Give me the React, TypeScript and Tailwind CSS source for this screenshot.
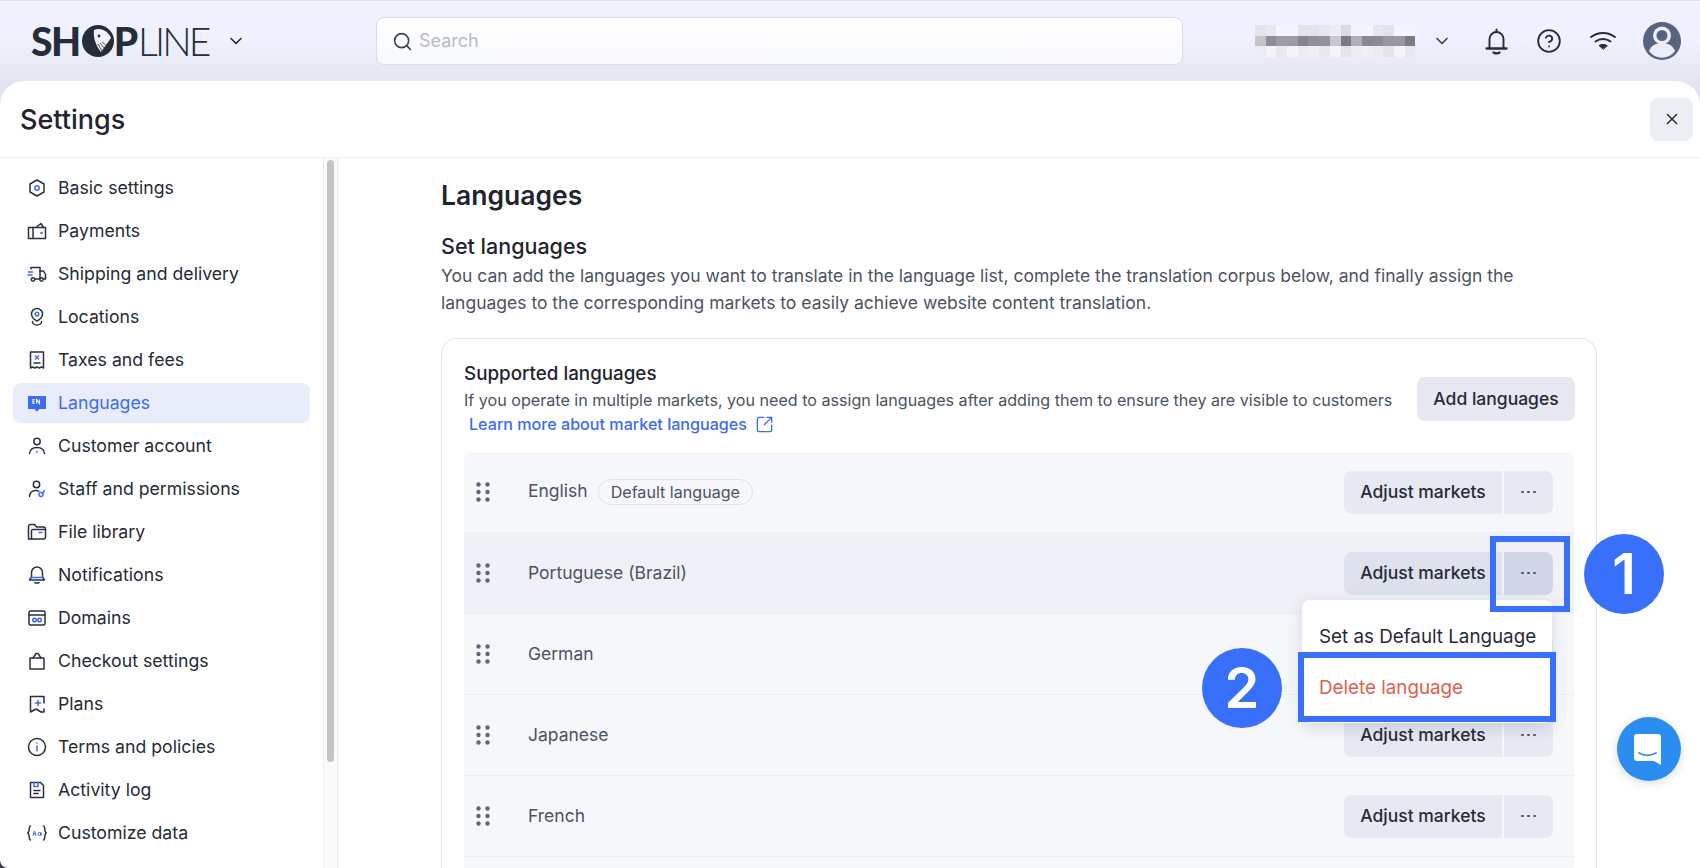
import { ChevronDown, CircleHelp, Search, SquareArrowOutUpRight, X } from "lucide-react";
import type { ReactNode } from "react";

const ink = "#2b3140";
const blue = "#3d6cf0";

function Ico({ children }: { children: ReactNode }) {
  return (
    <svg width="20" height="20" viewBox="0 0 20 20" fill="none" stroke={ink} strokeWidth="1.5" strokeLinecap="round" strokeLinejoin="round" className="shrink-0">
      {children}
    </svg>
  );
}

const navItems: { label: string; icon: ReactNode; active?: boolean }[] = [
  {
    label: "Basic settings",
    icon: (
      <Ico>
        <path d="M10 2l7 4v8l-7 4-7-4V6z" />
        <circle cx="10" cy="10" r="2.2" stroke={blue} />
      </Ico>
    ),
  },
  {
    label: "Payments",
    icon: (
      <Ico>
        <path d="M1.5 6.5h17v11h-17z" />
        <path d="M6 6.500v11" />
        <path d="M9 6.500l5-4 2.500 4" />
        <circle cx="14.500" cy="12" r=".6" stroke={blue} />
      </Ico>
    ),
  },
  {
    label: "Shipping and delivery",
    icon: (
      <Ico>
        <path d="M4 5V3.500h9V15H8" />
        <path d="M13 7h3.500l2 3.500V15h-2" />
        <circle cx="6" cy="15.500" r="1.700" />
        <circle cx="14.500" cy="15.500" r="1.700" />
        <path d="M1.500 8h4M1 11h4" stroke={blue} />
      </Ico>
    ),
  },
  {
    label: "Locations",
    icon: (
      <Ico>
        <path d="M10 14c-3-1.500-5.500-3.800-5.500-7a5.500 5.500 0 0 1 11 0c0 3.200-2.500 5.500-5.500 7z" />
        <circle cx="10" cy="7" r="1.800" stroke={blue} />
        <path d="M5.500 14.500c-.5 2 2 3.500 4.500 3.500s5-1.500 4.500-3.500" />
      </Ico>
    ),
  },
  {
    label: "Taxes and fees",
    icon: (
      <Ico>
        <path d="M3.500 2h13v16l-2.200-1-2.100 1-2.200-1-2.200 1-2.100-1-2.200 1z" />
        <path d="M8.500 6l3 3M11.500 6l-3 3" stroke={blue} />
        <path d="M7 13h6" />
      </Ico>
    ),
  },
  {
    label: "Languages",
    active: true,
    icon: (
      <svg width="20" height="20" viewBox="0 0 20 20" className="shrink-0">
        <path d="M1 3h18v13h-6.500L10 18.500 7.500 16H1z" fill={blue} />
        <path d="M7.500 6.500H6v4h1.500M6 8.500h1.500M9.500 10.500v-4l3 4v-4" stroke="#fff" strokeWidth="1.100" fill="none" />
      </svg>
    ),
  },
  {
    label: "Customer account",
    icon: (
      <Ico>
        <circle cx="10" cy="5.500" r="3.200" />
        <path d="M2.500 17.500c.5-4 3.500-6 7.500-6s7 2 7.500 6" />
        <path d="M10 15.500v.8" stroke={blue} />
      </Ico>
    ),
  },
  {
    label: "Staff and permissions",
    icon: (
      <Ico>
        <circle cx="9.500" cy="5.500" r="3.200" />
        <path d="M2.500 17.500c.3-3.800 3-6 6.500-6 1 0 2 .2 2.800.6" />
        <circle cx="14" cy="15.500" r="2" stroke={blue} />
        <path d="M15.500 14l2-2.500" stroke={blue} />
      </Ico>
    ),
  },
  {
    label: "File library",
    icon: (
      <Ico>
        <path d="M1.500 17V4.500a2 2 0 0 1 2-2h4l2 2.500h7a2 2 0 0 1 2 2V15a2 2 0 0 1-2 2z" />
        <path d="M4.500 17V9A1.500 1.500 0 0 1 6 7.500h12.500" />
        <path d="M12 10.500h3" stroke={blue} />
      </Ico>
    ),
  },
  {
    label: "Notifications",
    icon: (
      <Ico>
        <path d="M10 2a5.500 5.500 0 0 0-5.500 5.500V12L2.500 15h15l-2-3V7.500A5.500 5.500 0 0 0 10 2z" />
        <path d="M3.500 12.500h13" stroke={blue} />
        <path d="M8 17.500c.5.800 3.500.800 4 0" />
      </Ico>
    ),
  },
  {
    label: "Domains",
    icon: (
      <Ico>
        <rect x="2" y="3" width="16" height="14" rx="1.500" />
        <path d="M2 7h16" />
        <circle cx="7.500" cy="12" r="1.800" stroke={blue} />
        <circle cx="12.500" cy="12" r="1.800" stroke={blue} />
      </Ico>
    ),
  },
  {
    label: "Checkout settings",
    icon: (
      <Ico>
        <path d="M3 7h14v11H3z" />
        <path d="M6 7l3-4.500h2L14 7" />
      </Ico>
    ),
  },
  {
    label: "Plans",
    icon: (
      <Ico>
        <path d="M17 9V2.500H3.500V18l5.500-3 5 3h3v-3" />
        <path d="M11 6.500v5M8.500 9h5" stroke={blue} />
      </Ico>
    ),
  },
  {
    label: "Terms and policies",
    icon: (
      <Ico>
        <circle cx="10" cy="10" r="8.500" />
        <path d="M10 9v5" stroke={blue} />
        <path d="M10 6v.2" stroke={blue} />
      </Ico>
    ),
  },
  {
    label: "Activity log",
    icon: (
      <Ico>
        <path d="M3.500 2.500h10l3 3v12h-13z" />
        <path d="M7 2.500v4h4v-4" stroke={blue} />
        <path d="M7 10.500h6M7 13.500h4" />
      </Ico>
    ),
  },
  {
    label: "Customize data",
    icon: (
      <svg width="20" height="20" viewBox="0 0 20 20" fill="none" stroke={ink} strokeWidth="1.500" strokeLinecap="round" className="shrink-0">
        <path d="M3.500 3C1.500 3 3 9 .9 10c2.100 1 .6 7 2.600 7M16.500 3c2 0 .5 6 2.600 7-2.100 1-.6 7-2.600 7" />
        <path d="M6 12.500L7.500 8 9 12.500M6.500 11h2M14 9.500v3M14 11a1.500 1.500 0 1 1-3 0 1.500 1.500 0 0 1 3 0z" stroke={blue} strokeWidth="1" />
      </svg>
    ),
  },
];

// pixelated merchant name, each row is one band of the mosaic
const mosaic = [
  [226, 232, 244, 244, 226, 226, 230, 236, 218, 244, 244, 230, 226, 244, 244],
  [196, 142, 156, 156, 132, 144, 148, 200, 122, 176, 136, 140, 152, 152, 124],
  [236, 244, 232, 244, 236, 240, 232, 244, 228, 236, 240, 236, 228, 244, 232],
];

function NameMosaic() {
  return (
    <div className="flex flex-col">
      {mosaic.map((row, r) => (
        <div key={r} className="flex">
          {row.map((v, c) => (
            <div key={c} className="h-[10.7px] w-[10.7px]" style={{ backgroundColor: `rgb(${v},${v},${v + 6})` }} />
          ))}
        </div>
      ))}
    </div>
  );
}

function Logo() {
  return (
    <div className="flex h-[40px] items-center font-['Lato',sans-serif] text-[39px] leading-none text-[#262d3a]">
      <span className="font-black tracking-[-1.500px]">SH</span>
      <svg width="32" height="32" viewBox="0 0 32 32" className="ml-[2px] shrink-0">
        <circle cx="16" cy="16" r="16" fill="#262d3a" />
        <path d="M12 5c7-3 14 1 17 8l-10 14C14 21 11 13 12 5z" fill="#eef0fa" />
        <circle cx="17" cy="11" r="1.400" fill="#262d3a" />
        <path d="M16 19l4 7M18 18l5 6M20 17l5 4" stroke="#262d3a" strokeWidth=".8" />
      </svg>
      <span className="font-black">P</span>
      <span className="font-light tracking-[-2.900px]">LINE</span>
    </div>
  );
}

function DragHandle() {
  return (
    <svg width="14" height="20" viewBox="0 0 14 20" fill="#5f6678" className="shrink-0">
      <circle cx="2.500" cy="2.500" r="2.200" />
      <circle cx="11.500" cy="2.500" r="2.200" />
      <circle cx="2.500" cy="10" r="2.200" />
      <circle cx="11.500" cy="10" r="2.200" />
      <circle cx="2.500" cy="17.500" r="2.200" />
      <circle cx="11.500" cy="17.500" r="2.200" />
    </svg>
  );
}

function LanguageRow({ name, isDefault, hover }: { name: string; isDefault?: boolean; hover?: boolean }) {
  return (
    <div className={`flex h-[81px] shrink-0 items-center border-b border-[#eceef3] pl-[12px] pr-[21px] ${hover ? "bg-[#eff1f6]" : ""}`}>
      <DragHandle />
      <div className="ml-[38px] flex items-center gap-[10px] text-[17.500px] text-[#4c5361]">
        <span className={isDefault ? "-mt-[2px]" : ""}>{name}</span>
        {isDefault && (
          <span className="flex h-[26px] items-center rounded-full border border-[#dfe1e9] px-[12px] text-[16.100px]">Default language</span>
        )}
      </div>
      <div className="ml-auto flex h-[43px] gap-[2px] text-[17.500px] font-medium text-[#262b37]">
        <button className={`w-[158px] rounded-l-[8px] ${hover ? "bg-[#dde1ee]" : "bg-[#e6e8f2]"}`}>Adjust markets</button>
        <button className={`flex w-[49px] items-center justify-center gap-[3.500px] rounded-r-[8px] ${hover ? "bg-[#d1d7e9]" : "bg-[#e6e8f2]"}`}>
          <i className="h-[2.500px] w-[2.500px] rounded-full bg-[#4c5361]" />
          <i className="h-[2.500px] w-[2.500px] rounded-full bg-[#4c5361]" />
          <i className="h-[2.500px] w-[2.500px] rounded-full bg-[#4c5361]" />
        </button>
      </div>
    </div>
  );
}

export default function App() {
  return (
    <div className="relative flex h-screen flex-col overflow-hidden bg-[linear-gradient(180deg,#eff1fe_0px,#eff1fe_38px,#e2e4ef_85px,#e2e4ef_700px,#3a3f4a_701px)] font-['Inter',sans-serif]">
      <header className="flex h-[81px] shrink-0 items-center border-t border-[#dfe1ea] pr-[18px]">
        <div className="flex w-[376px] shrink-0 items-center pl-[31px]">
          <Logo />
          <ChevronDown size={20} color="#262d3a" strokeWidth={2} className="ml-[18px]" />
        </div>
        <div className="flex h-[48px] w-[807px] shrink-0 items-center rounded-[8px] border border-[#d9dce7] bg-[linear-gradient(180deg,#ffffff,#f8f9fd)] pl-[15px]">
          <Search size={21} color="#3c4350" strokeWidth={1.800} />
          <span className="-mt-[1px] ml-[6px] text-[18px] text-[#b6bac6]">Search</span>
        </div>
        <div className="ml-[72px]">
          <NameMosaic />
        </div>
        <ChevronDown size={20} color="#3c4350" strokeWidth={2} className="ml-[17px]" />
        <svg width="25" height="27" viewBox="0 0 25 27" fill="none" stroke="#262d3a" strokeWidth="1.900" strokeLinecap="round" strokeLinejoin="round" className="ml-[32px]">
          <path d="M12.500 1.500v2" />
          <path d="M5.500 20V11a7 7 0 0 1 14 0v9" />
          <path d="M2.500 20.500h20" strokeWidth="2.300" />
          <path d="M9.500 24.500c1 1.200 5 1.200 6 0" strokeWidth="2.300" />
        </svg>
        <CircleHelp size={26} color="#262d3a" strokeWidth={1.700} className="ml-[27px]" />
        <svg width="28" height="24" viewBox="0 0 28 24" fill="none" stroke="#262d3a" strokeWidth="2" strokeLinecap="round" className="ml-[27px]">
          <path d="M2 8c7-5.500 17-5.500 24 0" />
          <path d="M6.500 12.500c4.500-3.500 10.500-3.500 15 0" />
          <path d="M14 20l-4-3.500c2.300-1.500 5.700-1.500 8 0z" fill="#262d3a" strokeWidth="1" />
        </svg>
        <svg width="38" height="38" viewBox="0 0 38 38" className="ml-[26px]">
          <circle cx="19" cy="19" r="19" fill="#56647f" />
          <path d="M6 29c2-6 8-8 13-8s11 2 13 8a16 16 0 0 1-26 0z" fill="#eceef6" />
          <circle cx="19" cy="13.500" r="9" fill="#eceef6" />
          <circle cx="19" cy="13.500" r="5.500" fill="#56647f" />
        </svg>
      </header>

      <div className="flex min-h-0 flex-1 flex-col rounded-t-[24px] rounded-bl-[8px] bg-white">
        <div className="flex h-[77px] shrink-0 items-center justify-between border-b border-[#eff0f4] pl-[20px] pr-[7px]">
          <h1 className="mt-[2px] text-[27px] font-medium text-[#1f2530]">Settings</h1>
          <button className="flex h-[43px] w-[43px] items-center justify-center rounded-[8px] bg-[#eceef5]">
            <X size={18} color="#262d3a" strokeWidth={2} />
          </button>
        </div>
        <div className="flex min-h-0 flex-1">
          <aside className="relative flex w-[338px] shrink-0 border-r border-[#e9ebf0]">
            <nav className="flex w-[323px] flex-col gap-[3px] pl-[13px] pr-[13px] pt-[10px]">
              {navItems.map((item) => (
                <div
                  key={item.label}
                  className={`flex h-[40px] shrink-0 items-center gap-[11px] rounded-[8px] pl-[14px] text-[17.700px] ${item.active ? "bg-[#e8ecfb] text-[#3d6cf0]" : "text-[#262b37]"}`}
                >
                  {item.icon}
                  <span>{item.label}</span>
                </div>
              ))}
            </nav>
            <div className="w-[14px] border-l border-[#efefef] bg-[#fafafa] px-[3px] pt-[2px]">
              <div className="h-[602px] rounded-full bg-[#c4c4c4]" />
            </div>
          </aside>

          <main className="min-w-0 flex-1 overflow-hidden pl-[103px] pr-[103px] pt-[19px]">
            <h2 className="text-[26.500px] font-semibold leading-[36px] text-[#1f2530]">Languages</h2>
            <h3 className="mt-[19px] text-[21.500px] font-medium leading-[28px] text-[#1f2530]">Set languages</h3>
            <p className="mt-[2px] text-[17.500px] leading-[27px] text-[#4c5361]">
              You can add the languages you want to translate in the language list, complete the translation corpus below, and finally assign the languages to the corresponding markets to easily achieve website content translation.
            </p>
            <section className="mt-[22px] rounded-t-[16px] border border-b-0 border-[#e3e5ea] pl-[22px] pr-[22px] pt-[21px]">
              <div className="flex items-start justify-between">
                <div className="text-[16.130px] leading-[24px]">
                  <div className="text-[18.800px] font-medium leading-[28px] text-[#1f2530]">Supported languages</div>
                  <div className="text-[#4c5361]">If you operate in multiple markets, you need to assign languages after adding them to ensure they are visible to customers</div>
                  <div className="flex items-center gap-[8px] pl-[5px] font-medium text-[#3d6cf0]">
                    Learn more about market languages
                    <SquareArrowOutUpRight size={19} strokeWidth={1.700} />
                  </div>
                </div>
                <button className="-mr-[1px] mt-[17px] h-[44px] w-[158px] rounded-[8px] bg-[#e6e8f2] text-[17.500px] font-medium text-[#262b37]">Add languages</button>
              </div>
              <div className="mt-[16px] flex flex-col rounded-t-[8px] bg-[#f6f7fb]">
                <LanguageRow name="English" isDefault />
                <LanguageRow name="Portuguese (Brazil)" hover />
                <LanguageRow name="German" />
                <LanguageRow name="Japanese" />
                <LanguageRow name="French" />
                <div className="h-[40px]" />
              </div>
            </section>
          </main>
        </div>
      </div>

      {/* dropdown and the tutorial annotations lie over the page */}
      <div className="absolute left-[1302px] top-[600px] flex h-[123px] w-[250px] flex-col rounded-[8px] bg-white pt-[19px] text-[18.800px] shadow-[0_4px_16px_rgba(60,70,100,0.18)]">
        <div className="h-[51px] pl-[17px] leading-[36px] text-[#262b37]">Set as Default Language</div>
        <div className="pl-[17px] leading-[36px] text-[#e0604c]">Delete language</div>
      </div>
      <div className="absolute left-[1490px] top-[536px] h-[76px] w-[80px] border-[6px] border-[#386ffb]" />
      <div className="absolute left-[1298px] top-[652px] h-[70px] w-[258px] border-[6px] border-[#386ffb]" />
      <div className="absolute left-[1584px] top-[534px] flex h-[80px] w-[80px] items-center justify-center rounded-full bg-[#386ffb] text-[56px] font-semibold text-white">1</div>
      <div className="absolute left-[1202px] top-[648px] flex h-[80px] w-[80px] items-center justify-center rounded-full bg-[#386ffb] text-[56px] font-semibold text-white">2</div>
      <div className="absolute left-[1617px] top-[717px] flex h-[64px] w-[64px] items-center justify-center rounded-full bg-[#2b8df0] shadow-[0_2px_10px_rgba(60,70,100,0.2)]">
        <svg width="32" height="33" viewBox="0 0 32 33">
          <path d="M4 1h21a3 3 0 0 1 3 3v28l-7-4H4a3 3 0 0 1-3-3V4a3 3 0 0 1 3-3z" fill="#fff" />
          <path d="M6 20c5 3 11 3 17 0" fill="none" stroke="#2b8df0" strokeWidth="1.800" strokeLinecap="round" />
        </svg>
      </div>
    </div>
  );
}
